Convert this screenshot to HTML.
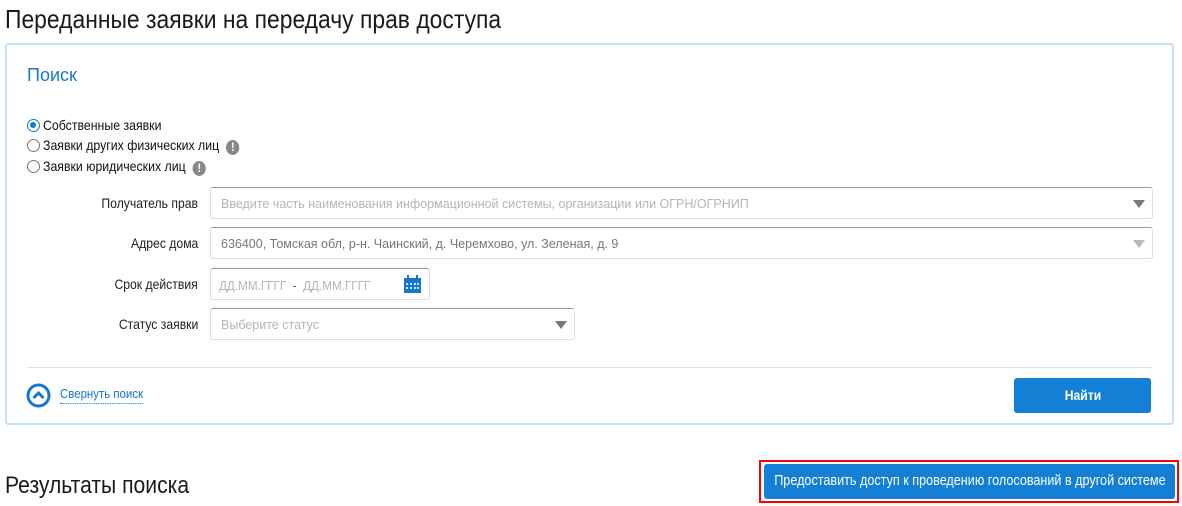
<!DOCTYPE html>
<html><head><meta charset="utf-8"><style>
*{box-sizing:border-box;margin:0;padding:0}
body{width:1182px;height:506px;background:#fff;font-family:"Liberation Sans",sans-serif;color:#222;position:relative;overflow:hidden}
.a{position:absolute;white-space:nowrap}
.cl{transform:scaleX(0.88);transform-origin:0 50%}
.cr{transform:scaleX(0.87);transform-origin:100% 50%}
.h1{left:5px;top:4px;font-size:26px;color:#1a1a1a}
.panel{left:5px;top:43px;width:1169px;height:382px;border:2px solid #c6e0f5;border-radius:3px}
.blue{color:#1577cf}
.inp{position:absolute;border:1px solid #ddd;border-top-color:#999;border-radius:3px;height:32px;font-size:12.5px;color:#b5b5b5;padding:9px 10px;white-space:nowrap;overflow:hidden}
.lab{position:absolute;right:984px;font-size:14px;color:#222;text-align:right;white-space:nowrap}
.tri{position:absolute;width:0;height:0;border-left:6px solid transparent;border-right:6px solid transparent;border-top:8px solid #777}
.radio{position:absolute;width:13px;height:13px;border:1.5px solid #777;border-radius:50%}
.rl{position:absolute;font-size:14px;color:#111;white-space:nowrap;transform:scaleX(0.88);transform-origin:0 50%}
.ex{display:inline-block;width:15px;height:15px;border-radius:50%;background:#888;color:#fff;font-size:12px;font-weight:bold;text-align:center;line-height:15px;margin-left:8px;vertical-align:-1px}
.btn{position:absolute;background:#1380d6;color:#fff;border-radius:3px;text-align:center;font-size:14px;font-weight:bold;white-space:nowrap}
.btn span{display:inline-block;transform:scaleX(0.87)}
</style></head><body>
<div class="a h1 cl">Переданные заявки на передачу прав доступа</div>
<div class="a panel"></div>
<div class="a blue" style="left:27px;top:65px;font-size:18px">Поиск</div>

<div class="radio" style="left:27px;top:119px;border-color:#1577cf"><div style="position:absolute;left:2px;top:2px;width:6px;height:6px;border-radius:50%;background:#1577cf"></div></div>
<div class="rl" style="left:43px;top:117px">Собственные заявки</div>
<div class="radio" style="left:27px;top:139px"></div>
<div class="rl" style="left:43px;top:137px">Заявки других физических лиц<span class="ex">!</span></div>
<div class="radio" style="left:27px;top:160px"></div>
<div class="rl" style="left:43px;top:158px">Заявки юридических лиц<span class="ex">!</span></div>

<div class="lab cr" style="top:195px">Получатель прав</div>
<div class="inp" style="left:210px;top:187px;width:943px">Введите часть наименования информационной системы, организации или ОГРН/ОГРНИП</div>
<div class="tri" style="left:1133px;top:200px"></div>

<div class="lab cr" style="top:235px">Адрес дома</div>
<div class="inp" style="left:210px;top:227px;width:943px;color:#777">636400, Томская обл, р-н. Чаинский, д. Черемхово, ул. Зеленая, д. 9</div>
<div class="tri" style="left:1133px;top:240px;border-top-color:#bbb"></div>

<div class="lab cr" style="top:276px">Срок действия</div>
<div class="inp" style="left:210px;top:268px;width:220px;padding-left:8px"><span style="display:inline-block;transform:scaleX(0.9);transform-origin:0 50%;font-size:13px">ДД.ММ.ГГГГ&nbsp;&nbsp;<span style="color:#555">-</span>&nbsp;&nbsp;ДД.ММ.ГГГГ</span></div>
<svg class="a" style="left:404px;top:275px" width="17" height="18" viewBox="0 0 17 18"><rect x="0" y="3" width="17" height="15" fill="#1577cf"/><rect x="3" y="0" width="2" height="5" fill="#1577cf"/><rect x="12" y="0" width="2" height="5" fill="#1577cf"/><g fill="#cfe4f7"><rect x="2" y="8" width="2" height="2"/><rect x="6" y="8" width="2" height="2"/><rect x="10" y="8" width="2" height="2"/><rect x="13" y="8" width="2" height="2"/><rect x="2" y="12" width="2" height="2"/><rect x="6" y="12" width="2" height="2"/><rect x="10" y="12" width="2" height="2"/><rect x="13" y="12" width="2" height="2"/></g></svg>

<div class="lab cr" style="top:316px">Статус заявки</div>
<div class="inp" style="left:210px;top:308px;width:365px">Выберите статус</div>
<div class="tri" style="left:555px;top:321px"></div>

<div class="a" style="left:27px;top:367px;width:1126px;height:1px;background:#e2e2e2"></div>
<svg class="a" style="left:26px;top:383px" width="25" height="25" viewBox="0 0 25 25"><circle cx="12.5" cy="12.5" r="10.5" fill="none" stroke="#1577cf" stroke-width="3"/><path d="M7.5 15 L12.5 10 L17.5 15" fill="none" stroke="#1577cf" stroke-width="3"/></svg>
<div class="a blue cl" style="left:60px;top:386px;font-size:13px;border-bottom:1px dotted #1577cf;padding-bottom:2px">Свернуть поиск</div>
<div class="btn" style="left:1014px;top:378px;width:137px;height:35px;line-height:35px"><span>Найти</span></div>

<div class="a cl" style="left:5px;top:472px;font-size:24px;color:#1a1a1a">Результаты поиска</div>
<div class="a" style="left:759px;top:460px;width:420px;height:43px;border:2px solid #f00"></div>
<div class="btn" style="left:764px;top:464px;width:411px;height:35px;line-height:35px;font-weight:normal;font-size:14.5px;overflow:visible"><span style="margin-left:-40px;margin-right:-40px">Предоставить доступ к проведению голосований в другой системе</span></div>
</body></html>
